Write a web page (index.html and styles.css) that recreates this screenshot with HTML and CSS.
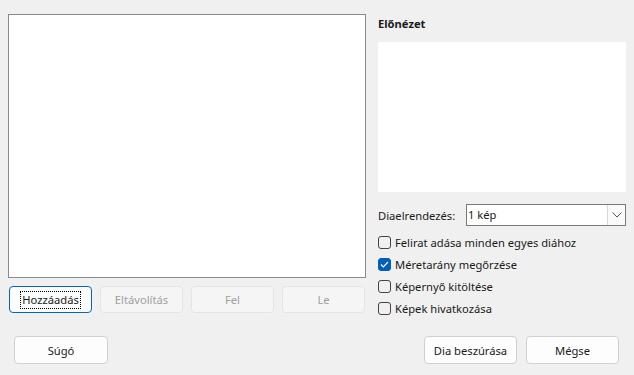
FILE: index.html
```html
<!DOCTYPE html>
<html lang="hu">
<head>
  <meta charset="UTF-8">
  <title>Fényképalbum</title>
  <link rel="stylesheet" href="styles.css">
</head>
<body>
  <div class="dialog">
    <div class="main">
      <!-- Bal oldal: képek listája -->
      <div class="left">
        <div class="listbox"></div>
        <div class="list-buttons">
          <button class="btn focused"><span class="focus-rect">Hozzáadás</span></button>
          <button class="btn" disabled>Eltávolítás</button>
          <button class="btn" disabled>Fel</button>
          <button class="btn" disabled>Le</button>
        </div>
      </div>

      <!-- Jobb oldal: előnézet és beállítások -->
      <div class="right">
        <div class="title">Előnézet</div>
        <div class="preview"></div>
        <div class="layout-row">
          <span class="label">Diaelrendezés:</span>
          <div class="combo">
            <span class="combo-value">1 kép</span>
            <span class="combo-arrow">
              <svg width="10" height="6" viewBox="0 0 10 6"><path d="M0.5 0.5 L5 5 L9.5 0.5" fill="none" stroke="#555" stroke-width="1"/></svg>
            </span>
          </div>
        </div>
        <label class="check"><span class="box"></span>Felirat adása minden egyes diához</label>
        <label class="check"><span class="box checked">
          <svg width="9" height="7" viewBox="0 0 9 7"><path d="M1 3.5 L3.3 5.8 L8 1" fill="none" stroke="#fff" stroke-width="1.2"/></svg>
        </span>Méretarány megőrzése</label>
        <label class="check"><span class="box"></span>Képernyő kitöltése</label>
        <label class="check"><span class="box"></span>Képek hivatkozása</label>
      </div>
    </div>

    <!-- Alsó gombsor -->
    <div class="footer">
      <button class="btn wide">Súgó</button>
      <div class="footer-right">
        <button class="btn wide">Dia beszúrása</button>
        <button class="btn wide">Mégse</button>
      </div>
    </div>
  </div>
</body>
</html>
```

FILE: styles.css
```css
/* Alap */
body {
  margin: 0;
  background-color: #f0f0f0;
  font-family: 'Noto Sans', 'Open Sans', sans-serif;
  font-size: 11.2px;
  color: #1a1a1a;
}

.dialog {
  width: 634px;
  height: 375px;
}

.main {
  display: flex;
  padding: 14px 0 0 8px;
}

/* Bal oldal */
.left {
  width: 358px;
}

.listbox {
  height: 262px;
  background-color: #ffffff;
  border: 1px solid #868a91;
}

.list-buttons {
  display: flex;
  gap: 8px;
  margin: 8px 0 0 1px;
}

/* Gombok */
.btn {
  font-family: inherit;
  font-size: 11.2px;
  color: #1a1a1a;
  width: 83px;
  height: 27px;
  padding: 0;
  background-color: #fdfdfd;
  border: 1px solid #d0d0d0;
  border-radius: 4px;
}

.btn:disabled {
  background-color: #f5f5f5;
  border-color: #e5e5e5;
  color: #a0a0a0;
}

.btn.focused {
  border-color: #0067c0;
}

.focus-rect {
  border: 1px dotted #000;
  padding: 0 1px 1px 1px;
}

.btn.wide {
  width: 94px;
  height: 28px;
}

/* Jobb oldal */
.right {
  width: 248px;
  margin-left: 12px;
}

.title {
  font-weight: bold;
  height: 28px;
  line-height: 20px;
}

.preview {
  height: 150px;
  background-color: #ffffff;
}

.layout-row {
  display: flex;
  align-items: center;
  margin-top: 12px;
  height: 22px;
}

.label {
  width: 88px;
}

.combo {
  display: flex;
  width: 158px;
  height: 20px;
  background-color: #ffffff;
  border: 1px solid #7a7a7a;
}

.combo-value {
  flex: 1;
  line-height: 20px;
  padding-left: 1px;
}

.combo-arrow {
  width: 17px;
  display: flex;
  align-items: center;
  justify-content: center;
  border-left: 1px solid #d6d6d6;
  background-color: #fafafa;
}

/* Jelölőnégyzetek */
.check {
  display: flex;
  align-items: center;
  height: 22px;
}

.check:first-of-type {
  margin-top: 5px;
}

.box {
  box-sizing: border-box;
  width: 13px;
  height: 13px;
  border: 1px solid #444;
  border-radius: 3px;
  margin-right: 4px;
  display: flex;
  align-items: center;
  justify-content: center;
}

.box.checked {
  background-color: #005fb8;
  border-color: #005fb8;
}

/* Alsó sor */
.footer {
  display: flex;
  justify-content: space-between;
  margin-top: 17px;
  padding: 0 15px 0 14px;
}

.footer-right {
  display: flex;
  gap: 9px;
}

.footer-right .btn {
  width: 93px;
}
```
